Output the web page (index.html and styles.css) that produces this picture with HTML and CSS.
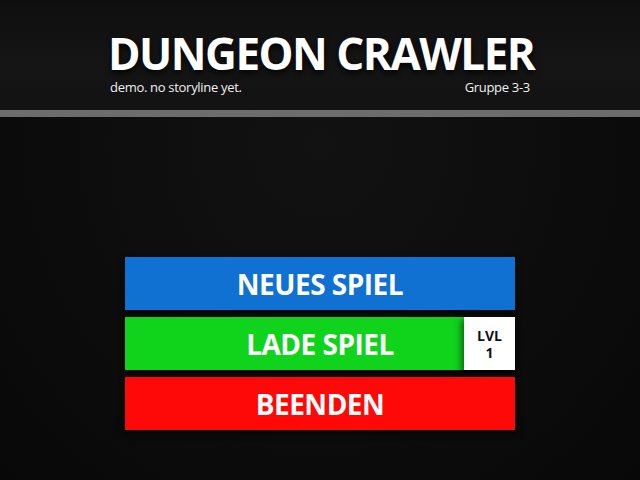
FILE: index.html
```html
<!DOCTYPE html>
<html>
<head>
<meta charset="utf-8">
<link rel="stylesheet" href="styles.css">
</head>
<body>
<header class="header">
  <div class="title-block">
    <h1 class="title">DUNGEON CRAWLER</h1>
    <div class="subline">
      <span>demo. no storyline yet.</span>
      <span>Gruppe 3-3</span>
    </div>
  </div>
</header>
<div class="stripe"></div>
<main class="menu">
  <div class="btn btn-blue">NEUES SPIEL</div>
  <div class="btn btn-green">
    <span class="btn-label">LADE SPIEL</span>
    <div class="lvl">LVL<br>1</div>
  </div>
  <div class="btn btn-red">BEENDEN</div>
</main>
</body>
</html>
```
FILE: styles.css
```css
html, body {
  margin: 0;
  padding: 0;
}
body {
  width: 640px;
  height: 480px;
  overflow: hidden;
  background: radial-gradient(ellipse at 50% 30%, #121212 0%, #0c0c0c 60%, #080808 100%);
  font-family: "Open Sans", "DejaVu Sans", sans-serif;
  color: #fff;
}
.header {
  height: 110px;
  background: linear-gradient(#0f0f0f, #151515 60%, #121212);
  display: flex;
  justify-content: center;
}
.title-block {
  width: 424px;
  padding-top: 34px;
}
.title {
  margin: 0;
  font-family: "Open Sans", sans-serif;
  font-weight: 700;
  font-size: 44px;
  line-height: 38px;
  letter-spacing: -1.5px;
  text-align: center;
  white-space: nowrap;
  text-shadow: 0 3px 6px rgba(0,0,0,0.9);
}
.subline {
  display: flex;
  justify-content: space-between;
  font-size: 13px;
  line-height: 16px;
  margin-top: 7px;
  padding: 0 2px 0 2px;
  color: #f0f0f0;
  letter-spacing: -0.3px;
}
.stripe {
  height: 7px;
  background: #6d6d6d;
}
.menu {
  width: 390px;
  margin: 140px auto 0;
  display: flex;
  flex-direction: column;
  gap: 7px;
}
.btn {
  height: 53px;
  display: flex;
  align-items: center;
  justify-content: center;
  font-family: "Open Sans", sans-serif;
  font-weight: 700;
  font-size: 28px;
  letter-spacing: -0.5px;
  box-shadow: 0 3px 6px rgba(0,0,0,0.6);
  position: relative;
}
.btn-blue { background: #1071d3; }
.btn-green { background: #10d31c; }
.btn-red { background: #ff0808; }
.lvl {
  position: absolute;
  right: 0;
  top: 0;
  width: 51px;
  height: 53px;
  background: #fff;
  color: #111;
  font-size: 14px;
  line-height: 17px;
  letter-spacing: 0;
  display: flex;
  align-items: center;
  justify-content: center;
  text-align: center;
  box-shadow: -3px 3px 6px rgba(0,0,0,0.5);
}
```
